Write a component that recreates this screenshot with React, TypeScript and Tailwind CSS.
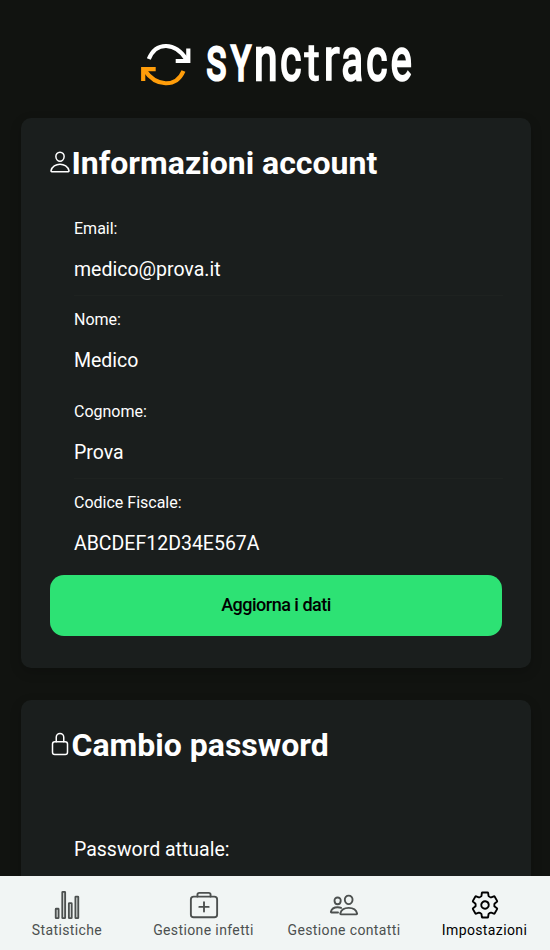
import React from "react";
import {
  IoPersonOutline,
  IoLockClosedOutline,
  IoStatsChartOutline,
  IoMedkitOutline,
  IoPeopleOutline,
  IoSettingsOutline,
} from "react-icons/io5";

type Glyph = { ch: string; x: number; size: number; sx: number; stroke: number };

// Condensed wordmark: every letter is squeezed to its own column.
const glyphs: Glyph[] = [
  { ch: "S", x: 216.3, size: 46.5, sx: 0.7, stroke: 3.2 },
  { ch: "Y", x: 241, size: 48, sx: 0.66, stroke: 3.6 },
  { ch: "n", x: 265.7, size: 61, sx: 0.7, stroke: 2.6 },
  { ch: "c", x: 290.8, size: 60, sx: 0.67, stroke: 2.6 },
  { ch: "t", x: 312.2, size: 52, sx: 0.9, stroke: 1.4 },
  { ch: "r", x: 331.6, size: 61, sx: 0.8, stroke: 1.4 },
  { ch: "a", x: 352.3, size: 60, sx: 0.66, stroke: 2.6 },
  { ch: "c", x: 376.8, size: 60, sx: 0.67, stroke: 2.6 },
  { ch: "e", x: 401.2, size: 60, sx: 0.66, stroke: 2.4 },
];

function Logo() {
  return (
    <svg className="overflow-visible" width="290" height="60" viewBox="130 34 290 60" aria-label="Synctrace">
      <g fill="none" strokeWidth="4.2">
        <path d="M148.8 59C156 41.500 175 41.500 187 60" stroke="#fff" />
        <path d="M188.300 48.500V61H175.700" stroke="#fff" />
        <path d="M183.500 71C176 88 156 87 144.500 70" stroke="#ff9d0a" />
        <path d="M143.200 81V69.200H155.700" stroke="#ff9d0a" />
      </g>
      <g fill="#fff" stroke="#fff" className="font-['Roboto',sans-serif] font-normal">
        {glyphs.map((g, i) => (
          <text
            key={i}
            textAnchor="middle"
            fontSize={g.size}
            strokeWidth={g.stroke}
            transform={`translate(${g.x} 80.3) scale(${g.sx} 1)`}
          >
            {g.ch}
          </text>
        ))}
      </g>
    </svg>
  );
}

function Field({ label, value, line }: { label: string; value: string; line?: boolean }) {
  return (
    <div className="ml-6 h-[91.5px]">
      <div className="pt-[14px] text-[16px] leading-[20px]">{label}</div>
      <div className="mt-[19px] text-[19.5px] leading-[24px]">{value}</div>
      {line && <div className="-mr-px mt-[13px] h-px bg-[#1e2220]" />}
    </div>
  );
}

const card = "mx-auto w-[510px] rounded-[10px] bg-[#1a1e1d] px-[29px] shadow-[0_4px_12px_rgba(0,0,0,0.2)]";

function Tab({ icon, label, active }: { icon: React.ReactNode; label: string; active?: boolean }) {
  return (
    <div className={`flex flex-col items-center ${active ? "text-black" : "text-[#4c504f]"}`}>
      <div className="text-[30px]">{icon}</div>
      <div className="mt-px whitespace-nowrap text-[14px] leading-[18px] tracking-[0.38px]">{label}</div>
    </div>
  );
}

export default function App() {
  return (
    <div className="flex h-[950px] w-[550px] flex-col overflow-hidden bg-[#111310] font-['Roboto',sans-serif] text-white">
      <main className="min-h-0 flex-1 overflow-hidden">
        <header className="flex h-[118px] justify-center pt-[34px]">
          <Logo />
        </header>
        <section className={`${card} h-[550px] translate-x-px`}>
          <h1 className="flex items-center pt-[24px] text-[32px] font-bold leading-[42px]">
            <IoPersonOutline className="-ml-[2.5px] mb-[3px] h-[24px] w-[24px] shrink-0" />
            Informazioni account
          </h1>
          <div className="mt-[20.5px]">
            <Field label="Email:" value="medico@prova.it" line />
            <Field label="Nome:" value="Medico" />
            <Field label="Cognome:" value="Prova" line />
            <Field label="Codice Fiscale:" value="ABCDEF12D34E567A" />
          </div>
          <button className="mt-[4px] block h-[61px] w-full rounded-[14px] bg-[#2de274] pb-[2px] text-[18px] font-medium tracking-[-0.5px] text-black">
            Aggiorna i dati
          </button>
        </section>
        <section className={`${card} mt-8 h-[550px] translate-x-px`}>
          <h1 className="flex items-center pt-[24px] text-[32px] font-bold leading-[42px]">
            <IoLockClosedOutline className="-ml-[2.5px] mb-[2px] h-[24px] w-[24px] shrink-0" />
            Cambio password
          </h1>
          <div className="ml-6 mt-[72px] text-[19.5px] leading-[24px]">Password attuale:</div>
        </section>
      </main>
      <nav className="grid h-[74px] shrink-0 grid-cols-[134px_139px_142px_139px] bg-[#f1f5f4] pt-[14px]">
        <Tab icon={<IoStatsChartOutline />} label="Statistiche" />
        <Tab icon={<IoMedkitOutline />} label="Gestione infetti" />
        <Tab icon={<IoPeopleOutline />} label="Gestione contatti" />
        <Tab icon={<IoSettingsOutline />} label="Impostazioni" active />
      </nav>
    </div>
  );
}
